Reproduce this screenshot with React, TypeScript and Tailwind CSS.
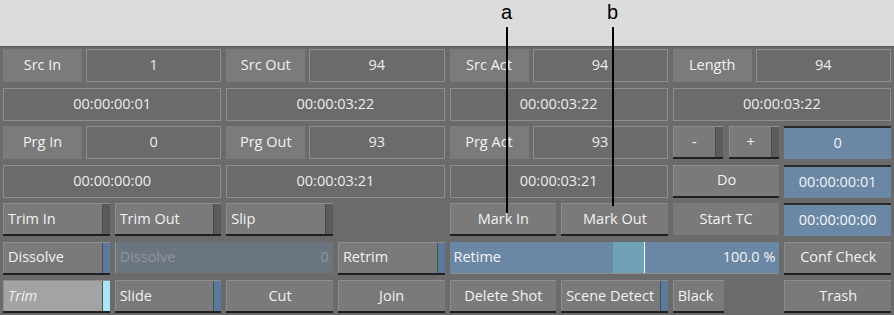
import React from 'react';
import clsx from 'clsx';

type Strip = 'dark' | 'blue' | 'cyan';

const stripClass: Record<Strip, string> = {
  dark: 'bg-[#5b5b5b]',
  blue: 'bg-[#5a7aa0]',
  cyan: 'bg-[#a9e6fa]',
};

const Label: React.FC<{ text: string }> = ({ text }) => (
  <div className="flex w-[79px] shrink-0 items-center justify-center bg-[#7b7b7b] text-[#f2f2f2]">{text}</div>
);

const Field: React.FC<{ text: string; blue?: boolean }> = ({ text, blue }) => (
  <div
    className={clsx(
      'flex flex-1 items-center justify-center',
      blue
        ? 'border-t-2 border-[#2a2a2a] bg-[#6a87a6] text-[#f4f4f4]'
        : 'border border-[#8e8e8e] bg-[#6b6b6b] text-[#ececec]'
    )}
  >
    {text}
  </div>
);

const Btn: React.FC<{
  text: string;
  left?: boolean;
  strip?: Strip;
  selected?: boolean;
  className?: string;
}> = ({ text, left, strip, selected, className }) => (
  <div
    className={clsx(
      'flex h-[31px] border-t border-l border-[#8e8e8e] shadow-[0_2px_0_#1f1f1f]',
      selected ? 'bg-[#a3a3a3]' : 'bg-[#7a7a7a]',
      className
    )}
  >
    <div
      className={clsx(
        'flex min-w-0 flex-1 items-center whitespace-nowrap text-[#f2f2f2]',
        left ? 'px-[4px]' : 'justify-center',
        selected && 'italic'
      )}
    >
      {text}
    </div>
    {strip && <div className={clsx('w-[8px] border-l border-[#4c4c4c]', stripClass[strip])} />}
  </div>
);

// top block: label + value, then timecode below
const TopCell: React.FC<{ label: string; value: string }> = ({ label, value }) => (
  <div className="col-span-2 flex gap-[4px]">
    <Label text={label} />
    <Field text={value} />
  </div>
);

const TcCell: React.FC<{ tc: string }> = ({ tc }) => (
  <div className="col-span-2 flex">
    <Field text={tc} />
  </div>
);

export default function App() {
  return (
    <div className="relative h-[315px] w-[894px] overflow-hidden bg-[#dcdcdc] font-['Open_Sans','DejaVu_Sans',sans-serif] text-[14.5px] leading-none">
      <div className="h-[46px]" />
      <div className="grid h-[269px] grid-cols-8 auto-rows-[33px] gap-x-[5px] gap-y-[5.5px] border-t border-[#5a5a5a] bg-[#6b6b6b] px-[3px] pt-[2px]">
        {/* row 1 */}
        <TopCell label="Src In" value="1" />
        <TopCell label="Src Out" value="94" />
        <TopCell label="Src Act" value="94" />
        <TopCell label="Length" value="94" />
        {/* row 2 */}
        <TcCell tc="00:00:00:01" />
        <TcCell tc="00:00:03:22" />
        <TcCell tc="00:00:03:22" />
        <TcCell tc="00:00:03:22" />
        {/* row 3 */}
        <TopCell label="Prg In" value="0" />
        <TopCell label="Prg Out" value="93" />
        <TopCell label="Prg Act" value="93" />
        <div className="flex gap-[6px]">
          <Btn text="-" strip="dark" className="flex-1" />
          <Btn text="+" strip="dark" className="flex-1" />
        </div>
        <div className="flex">
          <Field text="0" blue />
        </div>
        {/* row 4 */}
        <TcCell tc="00:00:00:00" />
        <TcCell tc="00:00:03:21" />
        <TcCell tc="00:00:03:21" />
        <Btn text="Do" />
        <div className="flex">
          <Field text="00:00:00:01" blue />
        </div>
        {/* row 5 */}
        <Btn text="Trim In" left strip="dark" />
        <Btn text="Trim Out" left strip="dark" />
        <Btn text="Slip" left strip="dark" />
        <div />
        <Btn text="Mark In" />
        <Btn text="Mark Out" />
        <div className="mb-[1px] flex items-center justify-center bg-[#7a7a7a] text-[#f2f2f2]">Start TC</div>
        <div className="flex">
          <Field text="00:00:00:00" blue />
        </div>
        {/* row 6 */}
        <Btn text="Dissolve" left strip="blue" />
        <div className="col-span-2 mb-[2px] flex items-center justify-between border-l border-[#8a939c] bg-[#6b7580] px-[4px] text-[#8d969f]">
          <span>Dissolve</span>
          <span>0</span>
        </div>
        <Btn text="Retrim" left strip="blue" />
        <div className="relative col-span-3 mb-[1px] flex items-center justify-between border-b border-[#8e8e8e] bg-[#6b87a6] px-[4px] text-[#f4f4f4]">
          <div className="absolute inset-y-0 left-[163px] w-[32px] border-r border-white bg-[#6fa2b6]" />
          <span className="relative">Retime</span>
          <span className="relative">100.0 %</span>
        </div>
        <Btn text="Conf Check" />
        {/* row 7 */}
        <Btn text="Trim" left strip="cyan" selected />
        <Btn text="Slide" left strip="blue" />
        <Btn text="Cut" />
        <Btn text="Join" />
        <Btn text="Delete Shot" />
        <Btn text="Scene Detect" left strip="blue" />
        <div className="flex gap-[6px]">
          <Btn text="Black" left className="flex-1" />
          <div className="flex-1" />
        </div>
        <Btn text="Trash" />
      </div>

      {/* callouts */}
      <div className="absolute left-[501px] top-[2px] font-['Liberation_Sans',Arial,sans-serif] text-[20px] leading-none text-black">a</div>
      <div className="absolute left-[506px] top-[27px] h-[186px] w-[2px] bg-black" />
      <div className="absolute left-[607px] top-[2px] font-['Liberation_Sans',Arial,sans-serif] text-[20px] leading-none text-black">b</div>
      <div className="absolute left-[612px] top-[27px] h-[179px] w-[2px] bg-black" />
    </div>
  );
}
